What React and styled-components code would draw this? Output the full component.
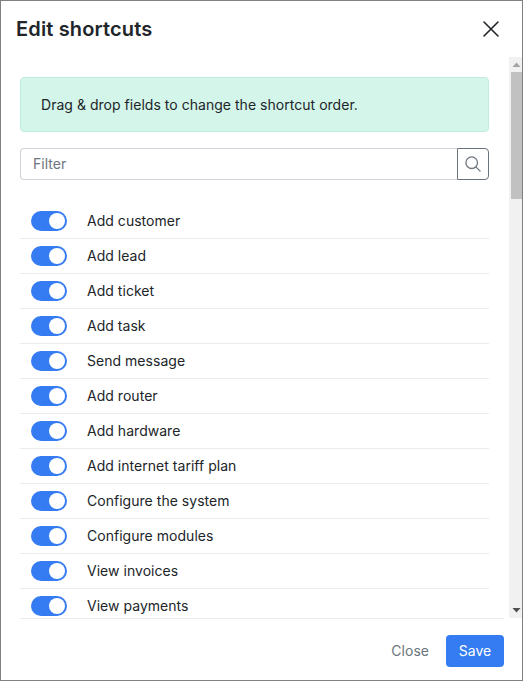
import React from "react";
import styled, { createGlobalStyle } from "styled-components";

const GlobalStyle = createGlobalStyle`
  *, *::before, *::after { box-sizing: border-box; }
  body { margin: 0; background: #fff; }
  button, input { font: inherit; letter-spacing: inherit; margin: 0; }
`;

const Dialog = styled.section`
  width: 523px;
  height: 681px;
  display: flex;
  flex-direction: column;
  border: 1px solid #808080;
  background: #fff;
  color: #212529;
  font: 400 14px/21px Inter, sans-serif;
  letter-spacing: 0.03px;
  overflow: hidden;
`;

const Header = styled.header`
  height: 56px;
  flex: none;
  display: flex;
  align-items: center;
  justify-content: space-between;
  padding: 0 22px 0 15px;
`;

const Title = styled.h5`
  margin: 0;
  font-size: 20px;
  line-height: 30px;
  font-weight: 600;
  letter-spacing: 0.15px;
`;

const CloseIcon = styled.button`
  display: flex;
  padding: 0;
  border: 0;
  background: none;
  color: #212529;
`;

const Body = styled.div`
  height: 561px;
  flex: none;
  display: flex;
`;

const Content = styled.div`
  width: 469px;
  margin: 20px 20px 0 19px;
  display: flex;
  flex-direction: column;
  overflow: hidden;
`;

const Notice = styled.div`
  height: 55px;
  flex: none;
  display: flex;
  align-items: center;
  padding: 0 20px;
  border: 1px solid #c0eedd;
  border-radius: 4px;
  background: #d4f5e9;
`;

const FilterGroup = styled.div`
  height: 32px;
  flex: none;
  display: flex;
  margin-top: 16px;
`;

const FilterInput = styled.input`
  flex: 1;
  min-width: 0;
  padding: 0 12px 1px;
  border: 1px solid #ced4da;
  border-right: 0;
  border-radius: 4px 0 0 4px;
  outline: 0;
  background: #fff;
  &::placeholder { color: #6c757d; opacity: 1; }
`;

const SearchButton = styled.button`
  width: 32px;
  display: flex;
  align-items: center;
  justify-content: center;
  padding: 0 0 1px;
  border: 1px solid #6c757d;
  border-radius: 0 4px 4px 0;
  background: #fff;
  color: #6c757d;
`;

const List = styled.ul`
  list-style: none;
  margin: 24px 0 0;
  padding: 0;
`;

const Row = styled.li`
  height: 35px;
  display: flex;
  align-items: center;
  gap: 20px;
  padding-left: 11px;
  border-bottom: 1px solid #e9ecef;
`;

const RowLabel = styled.span`
  padding-bottom: 1px;
`;

const Toggle = styled.span`
  width: 36px;
  height: 20px;
  display: flex;
  justify-content: ${({ $on }) => ($on ? "flex-end" : "flex-start")};
  padding: 2px;
  border-radius: 10px;
  background: ${({ $on }) => ($on ? "#357bf2" : "#ced4da")};
  &::after {
    content: "";
    width: 16px;
    height: 16px;
    border-radius: 50%;
    background: #fff;
  }
`;

const Scrollbar = styled.div`
  width: 13px;
  display: flex;
  flex-direction: column;
  justify-content: space-between;
  background: #f1f1f1;
`;

const ScrollArrow = styled.svg`
  display: block;
  width: 13px;
  height: 15px;
  fill: ${({ $dim }) => ($dim ? "#a3a3a3" : "#505050")};
`;

const ScrollThumb = styled.div`
  width: 11px;
  height: 127px;
  margin: 0 0 auto 2px;
  background: #c1c1c1;
`;

const Footer = styled.footer`
  flex: 1;
  display: flex;
  justify-content: flex-end;
  align-items: flex-start;
  gap: 4px;
  margin: 0 18px 0 19px;
  padding-top: 16px;
  border-top: 1px solid #e9ecef;
`;

const Button = styled.button`
  height: 32px;
  width: ${({ $primary }) => ($primary ? "58px" : "auto")};
  padding: 0 ${({ $primary }) => ($primary ? "0" : "12px")} 1px;
  border: 1px solid transparent;
  border-radius: 4px;
  background: ${({ $primary }) => ($primary ? "#357bf2" : "transparent")};
  color: ${({ $primary }) => ($primary ? "#fff" : "#6c757d")};
`;

const shortcuts = [
  "Add customer", "Add lead", "Add ticket", "Add task", "Send message",
  "Add router", "Add hardware", "Add internet tariff plan",
  "Configure the system", "Configure modules", "View invoices", "View payments",
];

export default function App() {
  return (
    <>
      <GlobalStyle />
      <Dialog>
        <Header>
          <Title>Edit shortcuts</Title>
          <CloseIcon aria-label="Close dialog">
            <svg width="18" height="18" viewBox="0 0 18 18" fill="none" stroke="currentColor" strokeWidth="1.6" strokeLinecap="round">
              <path d="M2 2 16 16M16 2 2 16" />
            </svg>
          </CloseIcon>
        </Header>
        <Body>
          <Content>
            <Notice>Drag &amp; drop fields to change the shortcut order.</Notice>
            <FilterGroup>
              <FilterInput placeholder="Filter" />
              <SearchButton aria-label="Search">
                <svg width="16" height="16" viewBox="0 0 16 16" fill="none" stroke="currentColor" strokeWidth="1.3" strokeLinecap="round">
                  <circle cx="6.7" cy="6.7" r="5.8" />
                  <path d="m10.9 10.9 4.2 4.2" />
                </svg>
              </SearchButton>
            </FilterGroup>
            <List>
              {shortcuts.map((name) => (
                <Row key={name}>
                  <Toggle $on />
                  <RowLabel>{name}</RowLabel>
                </Row>
              ))}
            </List>
          </Content>
          <Scrollbar>
            <ScrollArrow $dim viewBox="0 0 13 15"><path d="M3.5 10 7.5 5.5 11.5 10Z" /></ScrollArrow>
            <ScrollThumb />
            <ScrollArrow viewBox="0 0 13 15"><path d="M3.5 5H11.5L7.5 9.5Z" /></ScrollArrow>
          </Scrollbar>
        </Body>
        <Footer>
          <Button>Close</Button>
          <Button $primary>Save</Button>
        </Footer>
      </Dialog>
    </>
  );
}
